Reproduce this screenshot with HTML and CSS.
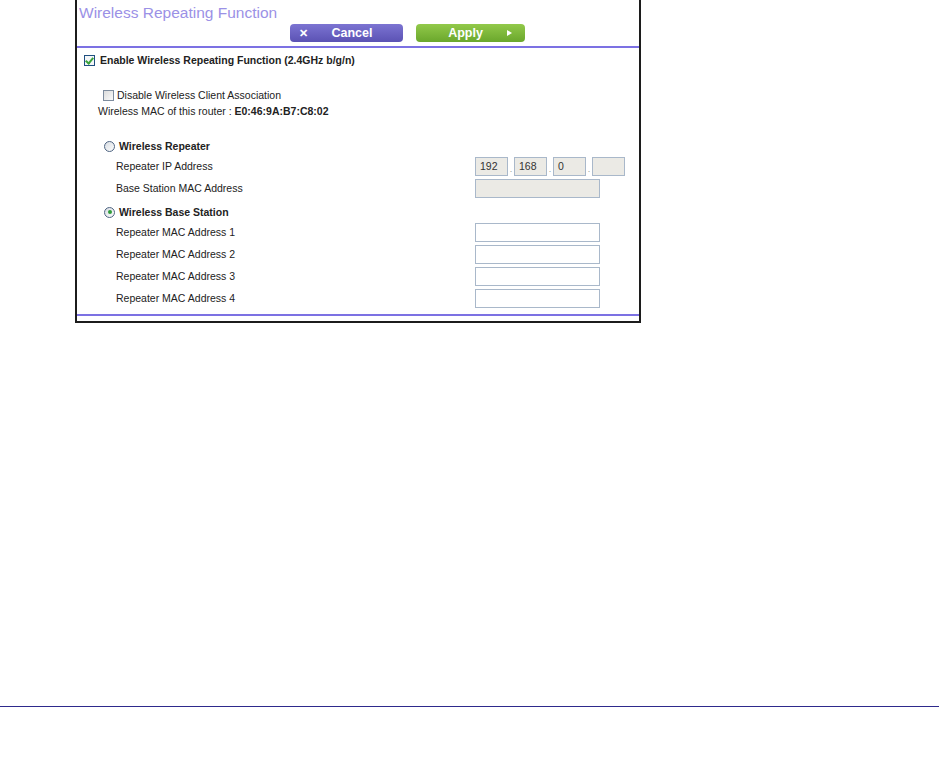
FILE: index.html
```html
<!DOCTYPE html>
<html lang="en">
<head>
    <meta charset="UTF-8">
    <title>Wireless Repeating Function</title>
    <link rel="stylesheet" href="styles.css">
</head>
<body>
    <div class="frame">
        <div class="title">Wireless Repeating Function</div>
        <div class="buttons">
            <button class="btn btn-cancel"><span class="btn-icon">&#10005;</span><span class="btn-text">Cancel</span></button>
            <button class="btn btn-apply"><span class="btn-text">Apply</span><span class="btn-arrow"></span></button>
        </div>
        <div class="rule"></div>

        <div class="row row-enable">
            <span class="check checked"></span>
            <span class="bold">Enable Wireless Repeating Function (2.4GHz b/g/n)</span>
        </div>

        <div class="row row-small row-disable">
            <span class="check"></span>
            <span>Disable Wireless Client Association</span>
        </div>
        <div class="row row-small row-mac">
            <span>Wireless MAC of this router : <b>E0:46:9A:B7:C8:02</b></span>
        </div>

        <div class="row row-radio row-repeater">
            <span class="radio"></span>
            <span class="bold">Wireless Repeater</span>
        </div>
        <div class="row field">
            <span class="label">Repeater IP Address</span>
            <div class="ip">
                <span class="input grey">192</span><span class="dot">.</span>
                <span class="input grey">168</span><span class="dot">.</span>
                <span class="input grey">0</span><span class="dot">.</span>
                <span class="input grey"></span>
            </div>
        </div>
        <div class="row field">
            <span class="label">Base Station MAC Address</span>
            <span class="input wide grey"></span>
        </div>

        <div class="row row-radio row-base">
            <span class="radio selected"></span>
            <span class="bold">Wireless Base Station</span>
        </div>
        <div class="row field">
            <span class="label">Repeater MAC Address 1</span>
            <span class="input wide"></span>
        </div>
        <div class="row field">
            <span class="label">Repeater MAC Address 2</span>
            <span class="input wide"></span>
        </div>
        <div class="row field">
            <span class="label">Repeater MAC Address 3</span>
            <span class="input wide"></span>
        </div>
        <div class="row field">
            <span class="label">Repeater MAC Address 4</span>
            <span class="input wide"></span>
        </div>
        <div class="rule rule-bottom"></div>
    </div>

    <div class="page-rule"></div>
</body>
</html>
```

FILE: styles.css
```css
* {
    margin: 0;
    padding: 0;
    box-sizing: border-box;
}

body {
    background: #fff;
    font-family: "Liberation Sans", Arial, sans-serif;
    font-size: 10.5px;
    color: #222;
}

.frame {
    margin-left: 75px;
    width: 566px;
    height: 323px;
    border: 2px solid #1c1c1c;
    border-top: none;
}

.title {
    height: 24px;
    padding: 2px 0 0 2px;
    line-height: 22px;
    font-size: 15.5px;
    color: #9b91e6;
}

.buttons {
    display: flex;
    gap: 13px;
    height: 18px;
    margin-left: 213px;
}

.btn {
    display: flex;
    align-items: center;
    height: 18px;
    border: none;
    border-radius: 4px;
    color: #fff;
    font-family: "Liberation Sans", Arial, sans-serif;
    font-weight: bold;
    font-size: 12.5px;
}

.btn-cancel {
    width: 113px;
    padding: 0 8px 0 7px;
    background: linear-gradient(#7c74d2, #5b52b4);
}

.btn-apply {
    width: 109px;
    padding: 0 13px 0 8px;
    background: linear-gradient(#92c94a, #6aa72c);
}

.btn-icon {
    width: 12px;
    font-size: 11px;
}

.btn-text {
    flex: 1;
    text-align: center;
}

.btn-arrow {
    width: 0;
    height: 0;
    border-top: 3px solid transparent;
    border-bottom: 3px solid transparent;
    border-left: 5px solid #fff;
}

.rule {
    margin-top: 4px;
    border-top: 2px solid #7c71e3;
}

.rule-bottom {
    margin-top: 5px;
}

.row {
    display: flex;
    align-items: center;
    height: 22px;
}

.row-enable {
    margin-top: 1px;
    padding-left: 7px;
}

.row-small {
    height: 16px;
}

.row-disable {
    margin-top: 16px;
    padding-left: 26px;
}

.row-mac {
    padding-left: 21px;
}

.row-radio {
    height: 18px;
    padding-left: 27px;
}

.row-repeater {
    margin-top: 18px;
}

.row-base {
    margin-top: 4px;
}

.bold {
    font-weight: bold;
}

.check {
    width: 11px;
    height: 11px;
    margin-right: 5px;
    border: 1px solid #7e8c9e;
    background: linear-gradient(135deg, #dcdcdc, #fafafa);
    position: relative;
}

.row-disable .check {
    margin-right: 3px;
}

.check.checked {
    border-color: #1f4f80;
    background: #f4f6f8;
}

.check.checked::after {
    content: "";
    position: absolute;
    left: 2px;
    top: 0;
    width: 3px;
    height: 6px;
    border-right: 2px solid #3aa33a;
    border-bottom: 2px solid #3aa33a;
    transform: rotate(40deg);
}

.radio {
    width: 11px;
    height: 11px;
    margin-right: 4px;
    border: 1px solid #4e6482;
    border-radius: 50%;
    background: linear-gradient(135deg, #d8dde3, #fcfcfc);
    position: relative;
}

.radio.selected::after {
    content: "";
    position: absolute;
    left: 2.5px;
    top: 2.5px;
    width: 4px;
    height: 4px;
    border-radius: 50%;
    background: #2f9c3a;
}

.field {
    padding-left: 39px;
}

.label {
    width: 359px;
}

.ip {
    display: flex;
    align-items: flex-end;
}

.input {
    display: flex;
    align-items: center;
    width: 33px;
    height: 19px;
    padding-left: 4px;
    border: 1px solid #a9b8ca;
    background: #fff;
    color: #333;
    font-size: 10.5px;
}

.input.wide {
    width: 125px;
}

.input.grey {
    background: #ebeae5;
}

.dot {
    width: 6px;
    text-align: center;
    color: #999;
    font-size: 9px;
    line-height: 14px;
}

.page-rule {
    margin-top: 383px;
    border-top: 1px solid #2e2a8c;
}
```
